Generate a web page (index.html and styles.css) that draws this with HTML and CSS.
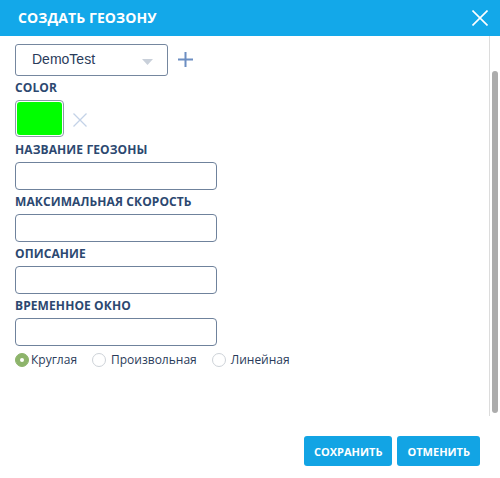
FILE: index.html
```html
<!DOCTYPE html>
<html lang="ru">
<head>
<meta charset="utf-8">
<title>Создать геозону</title>
<link rel="stylesheet" href="styles.css">
</head>
<body>
<div class="dialog">
  <header class="dlg-head">
    <h1 class="dlg-title">СОЗДАТЬ ГЕОЗОНУ</h1>
    <button class="dlg-close" aria-label="Закрыть">
      <svg width="16" height="16" viewBox="0 0 16 16"><path d="M0.5 0.5 L15.5 15.5 M15.5 0.5 L0.5 15.5" stroke="#fff" stroke-width="1.6" fill="none"/></svg>
    </button>
  </header>
  <div class="dlg-bodywrap">
    <div class="dlg-body">
      <div class="row-select">
        <div class="select">
          <span class="select-text">DemoTest</span>
          <svg class="caret" width="11" height="6" viewBox="0 0 11 6"><path d="M0 0 H11 L5.5 6 Z" fill="#c9d0da"/></svg>
        </div>
        <svg class="plus" width="15" height="15" viewBox="0 0 15 15"><path d="M7.5 0 V15 M0 7.5 H15" stroke="#6c8ec2" stroke-width="2" fill="none"/></svg>
      </div>
      <div class="label">COLOR</div>
      <div class="row-color">
        <div class="swatch"><div class="swatch-fill"></div></div>
        <svg class="clear" width="14" height="14" viewBox="0 0 14 14"><path d="M0.5 0.5 L13.5 13.5 M13.5 0.5 L0.5 13.5" stroke="#c3d2e7" stroke-width="1.3" fill="none"/></svg>
      </div>
      <div class="label first">НАЗВАНИЕ ГЕОЗОНЫ</div>
      <input class="field" type="text">
      <div class="label">МАКСИМАЛЬНАЯ СКОРОСТЬ</div>
      <input class="field" type="text">
      <div class="label">ОПИСАНИЕ</div>
      <input class="field" type="text">
      <div class="label">ВРЕМЕННОЕ ОКНО</div>
      <input class="field" type="text">
      <div class="radios">
        <label class="radio"><span class="dot checked"></span>Круглая</label>
        <label class="radio"><span class="dot"></span>Произвольная</label>
        <label class="radio"><span class="dot"></span>Линейная</label>
      </div>
    </div>
    <div class="scrollbar"><div class="thumb"></div></div>
  </div>
  <footer class="dlg-foot">
    <button class="btn">СОХРАНИТЬ</button>
    <button class="btn">ОТМЕНИТЬ</button>
  </footer>
</div>
</body>
</html>
```

FILE: styles.css
```css
* { box-sizing: border-box; }
html, body { margin: 0; padding: 0; background: #fff; }
body { font-family: "Open Sans", "Liberation Sans", sans-serif; width: 500px; height: 478px; overflow: hidden; }

.dialog { width: 500px; height: 478px; display: flex; flex-direction: column; }

.dlg-head {
  height: 36px; background: #13a8e9; display: flex; align-items: center;
  justify-content: space-between; padding: 0 12px 0 18px;
}
.dlg-title { margin: 0; color: #fff; font-size: 14px; font-weight: 700; line-height: 16px; letter-spacing: 0.1px; }
.dlg-close { background: none; border: 0; padding: 0; width: 16px; height: 16px; display: block; }
.dlg-close svg { display: block; }

.dlg-bodywrap { height: 380px; display: flex; }
.dlg-body { flex: 1; padding: 8px 0 0 15px; display: flex; flex-direction: column; align-items: flex-start; }

.scrollbar { width: 11px; border-left: 1px solid #dcdcdc; padding: 35px 0 0 2px; }
.thumb { width: 6px; height: 342px; background: #acacac; border-radius: 3px; }

.row-select { display: flex; align-items: center; gap: 10px; }
.select {
  width: 153px; height: 32px; border: 1px solid #75879f; border-radius: 3px;
  display: flex; align-items: center; justify-content: space-between; padding: 0 14px 0 16px;
}
.select-text { font-family: "Liberation Sans", Arial, sans-serif; font-size: 14px; color: #2a3b5a; margin-top: -3px; }
.caret { display: block; margin-top: 4px; }
.plus { display: block; margin-top: -2px; }

.label {
  font-size: 12px; font-weight: 700; color: #2c4870; line-height: 16px;
  margin-top: 4px; letter-spacing: 0.1px;
}
.label.first { margin-top: 5px; }
.label + .field, .label + .row-color { margin-top: 4px; }
.row-color { display: flex; align-items: center; gap: 9px; margin-top: 5px; }
.swatch { width: 49px; height: 37px; border: 1px solid #8b9aaa; border-radius: 4px; padding: 1px; }
.swatch-fill { width: 100%; height: 100%; background: #00ff00; border-radius: 3px; }
.clear { display: block; margin-top: 2px; }

.field {
  width: 202px; height: 28px; border: 1px solid #6f829c; border-radius: 4px;
  background: #fff; padding: 0 6px; font: inherit; margin: 0; display: block;
}

.radios { display: flex; align-items: center; margin-top: 5px; gap: 15px; }
.radio { display: flex; align-items: center; gap: 2px; font-size: 12px; color: #2a3b5a; line-height: 17px; }
.radio + .radio { gap: 5px; }
.dot {
  width: 14px; height: 14px; border-radius: 50%; border: 1px solid #cdd2d8; background: #fff;
  display: inline-flex; align-items: center; justify-content: center;
}
.dot.checked { background: #8db46b; border-color: #8db46b; }
.dot.checked::after { content: ""; width: 4px; height: 4px; border-radius: 50%; background: #fff; }

.dlg-foot { flex: 1; display: flex; justify-content: flex-end; align-items: flex-start; gap: 5px; padding: 20px 20px 0 0; }
.btn {
  height: 30px; background: #12a4e4; color: #fff; border: 0; border-radius: 3px;
  font-family: "Open Sans", sans-serif; font-weight: 700; font-size: 11px; padding: 0 10px; letter-spacing: 0;
}
```
